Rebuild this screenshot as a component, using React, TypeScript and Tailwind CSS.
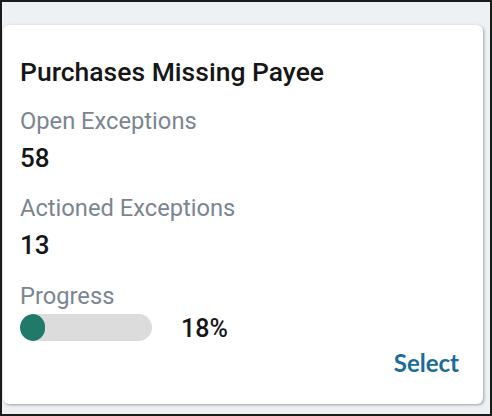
import React from "react";

export default function App() {
  const progress = 18;
  return (
    <div className="w-[492px] h-[416px] border-2 border-[#1b1b1b] bg-[#eef1f4] pt-[23px] pl-px" style={{ fontFamily: "Roboto, sans-serif" }}>
      <div className="w-[480px] h-[379px] bg-white rounded-md shadow-[1px_1px_3px_rgba(0,0,0,0.35)] pt-[31px] pl-[17px] pr-[24px] flex flex-col">
        <div className="text-[26.5px] leading-[32px] font-medium text-[#161616]">Purchases Missing Payee</div>
        <div className="mt-[19px] text-[23.7px] leading-[28px] text-[#7b8591]">Open Exceptions</div>
        <div className="mt-[9px] text-[26px] leading-[28px] font-medium text-[#161616]">58</div>
        <div className="mt-[22px] text-[23.7px] leading-[28px] text-[#7b8591]">Actioned Exceptions</div>
        <div className="mt-[9px] text-[26px] leading-[28px] font-medium text-[#161616]">13</div>
        <div className="mt-[23px] text-[23.7px] leading-[28px] text-[#7b8591]">Progress</div>
        <div className="mt-[3px] flex items-center h-[28px]">
          <div className="w-[132px] h-[27px] rounded-full bg-[#dcdcdc] overflow-hidden">
            <div className="h-full w-[25px] rounded-full bg-[#1f7a6a]" />
          </div>
          <div className="ml-[29px] text-[25px] leading-[28px] font-medium text-[#161616] translate-y-[2px]">{progress}%</div>
        </div>
        <div className="mt-[8px] flex justify-end">
          <span className="text-[24px] leading-[28px] font-bold text-[#1b6c9b]" style={{ fontFamily: "Lato, sans-serif" }}>Select</span>
        </div>
      </div>
    </div>
  );
}
